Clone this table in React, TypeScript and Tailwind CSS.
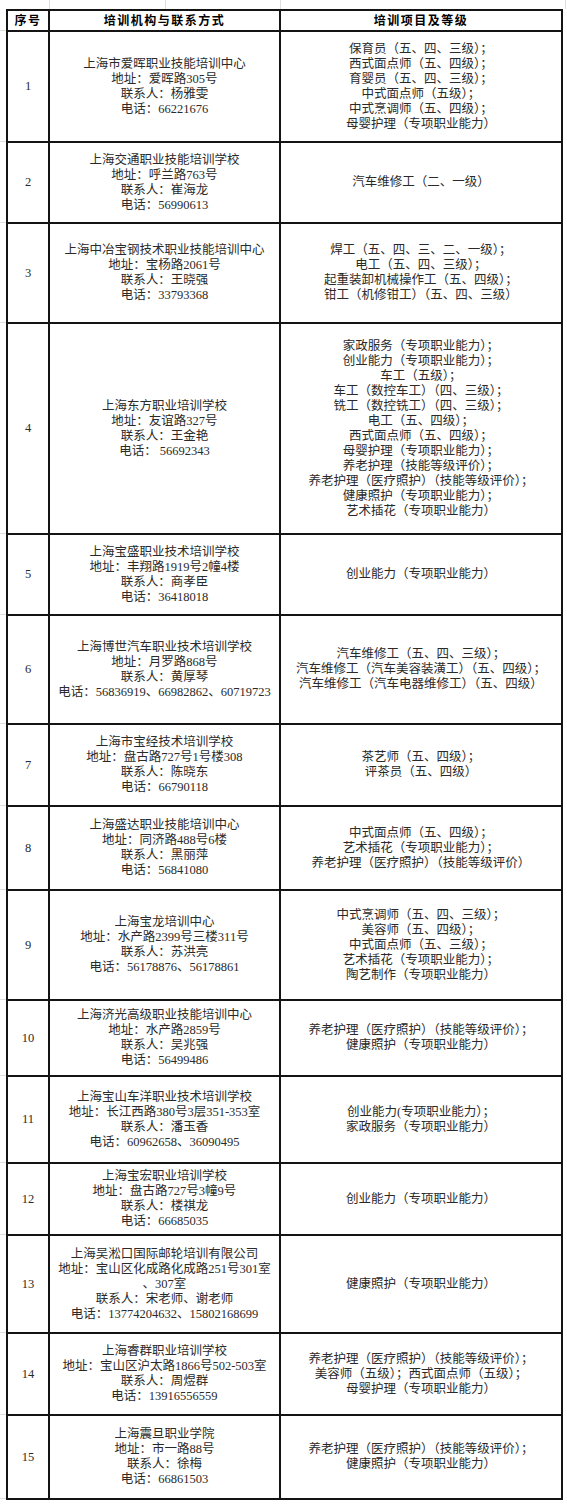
import React from 'react';

interface Row {
  no: string;
  h: string;
  g: string;
  org: string[];
  items: string[];
}

const rows: Row[] = [
  {
    no: '1',
    h: 'h-[109px]',
    g: 'h-[111px]',
    org: ['上海市爱晖职业技能培训中心', '地址：爱晖路305号', '联系人：杨雅雯', '电话：66221676'],
    items: [
      '保育员（五、四、三级）；',
      '西式面点师（五、四级）；',
      '育婴员（五、四、三级）；',
      '中式面点师（五级）；',
      '中式烹调师（五、四级）；',
      '母婴护理（专项职业能力）'
    ]
  },
  {
    no: '2',
    h: 'h-[79px]',
    g: 'h-[81px]',
    org: ['上海交通职业技能培训学校', '地址：呼兰路763号', '联系人：崔海龙', '电话：56990613'],
    items: ['汽车维修工（二、一级）']
  },
  {
    no: '3',
    h: 'h-[98px]',
    g: 'h-[100px]',
    org: ['上海中冶宝钢技术职业技能培训中心', '地址：宝杨路2061号', '联系人：王晓强', '电话：33793368'],
    items: [
      '焊工（五、四、三、二、一级）；',
      '电工（五、四、三级）；',
      '起重装卸机械操作工（五、四级）；',
      '钳工（机修钳工）（五、四、三级）'
    ]
  },
  {
    no: '4',
    h: 'h-[209px]',
    g: 'h-[211px]',
    org: ['上海东方职业培训学校', '地址：友谊路327号', '联系人：王金艳', '电话： 56692343'],
    items: [
      '家政服务（专项职业能力）；',
      '创业能力（专项职业能力）；',
      '车工（五级）；',
      '车工（数控车工）（四、三级）；',
      '铣工（数控铣工）（四、三级）；',
      '电工（五、四级）；',
      '西式面点师（五、四级）；',
      '母婴护理（专项职业能力）；',
      '养老护理（技能等级评价）；',
      '养老护理（医疗照护）（技能等级评价）；',
      '健康照护（专项职业能力）；',
      '艺术插花（专项职业能力）'
    ]
  },
  {
    no: '5',
    h: 'h-[79px]',
    g: 'h-[81px]',
    org: ['上海宝盛职业技术培训学校', '地址：丰翔路1919号2幢4楼', '联系人：商孝臣', '电话：36418018'],
    items: ['创业能力（专项职业能力）']
  },
  {
    no: '6',
    h: 'h-[107px]',
    g: 'h-[109px]',
    org: ['上海博世汽车职业技术培训学校', '地址：月罗路868号', '联系人：黄厚琴', '电话：56836919、66982862、60719723'],
    items: [
      '汽车维修工（五、四、三级）；',
      '汽车维修工（汽车美容装潢工）（五、四级）；',
      '汽车维修工（汽车电器维修工）（五、四级）'
    ]
  },
  {
    no: '7',
    h: 'h-[80px]',
    g: 'h-[82px]',
    org: ['上海市宝经技术培训学校', '地址：盘古路727号1号楼308', '联系人：陈晓东', '电话：66790118'],
    items: ['茶艺师（五、四级）；', '评茶员（五、四级）']
  },
  {
    no: '8',
    h: 'h-[82px]',
    g: 'h-[84px]',
    org: ['上海盛达职业技能培训中心', '地址：同济路488号6楼', '联系人：黑丽萍', '电话：56841080'],
    items: ['中式面点师（五、四级）；', '艺术插花（专项职业能力）；', '养老护理（医疗照护）（技能等级评价）']
  },
  {
    no: '9',
    h: 'h-[108px]',
    g: 'h-[110px]',
    org: ['上海宝龙培训中心', '地址：水产路2399号三楼311号', '联系人：苏洪亮', '电话：56178876、56178861'],
    items: [
      '中式烹调师（五、四、三级）；',
      '美容师（五、四级）；',
      '中式面点师（五、三级）；',
      '艺术插花（专项职业能力）；',
      '陶艺制作（专项职业能力）'
    ]
  },
  {
    no: '10',
    h: 'h-[74px]',
    g: 'h-[76px]',
    org: ['上海济光高级职业技能培训中心', '地址：水产路2859号', '联系人：吴兆强', '电话：56499486'],
    items: ['养老护理（医疗照护）（技能等级评价）；', '健康照护（专项职业能力）']
  },
  {
    no: '11',
    h: 'h-[85px]',
    g: 'h-[87px]',
    org: ['上海宝山车洋职业技术培训学校', '地址：长江西路380号3层351-353室', '联系人：潘玉香', '电话：60962658、36090495'],
    items: ['创业能力(专项职业能力）；', '家政服务（专项职业能力）']
  },
  {
    no: '12',
    h: 'h-[70px]',
    g: 'h-[72px]',
    org: ['上海宝宏职业培训学校', '地址：盘古路727号3幢9号', '联系人：楼祺龙', '电话：66685035'],
    items: ['创业能力（专项职业能力）']
  },
  {
    no: '13',
    h: 'h-[96px]',
    g: 'h-[98px]',
    org: [
      '上海吴淞口国际邮轮培训有限公司',
      '地址：宝山区化成路化成路251号301室',
      '、307室',
      '联系人：宋老师、谢老师',
      '电话：13774204632、15802168699'
    ],
    items: ['健康照护（专项职业能力）']
  },
  {
    no: '14',
    h: 'h-[80px]',
    g: 'h-[82px]',
    org: ['上海睿群职业培训学校', '地址：宝山区沪太路1866号502-503室', '联系人：周煜群', '电话：13916556559'],
    items: ['养老护理（医疗照护）（技能等级评价）；', '美容师（五级）；西式面点师（五级）；', '母婴护理（专项职业能力）']
  },
  {
    no: '15',
    h: 'h-[82px]',
    g: 'h-[84px]',
    org: ['上海震旦职业学院', '地址：市一路88号', '联系人：徐梅', '电话：66861503'],
    items: ['养老护理（医疗照护）（技能等级评价）；', '健康照护（专项职业能力）']
  }
];

const cell = 'bg-white flex flex-col items-center justify-center text-center whitespace-nowrap';

export default function App() {
  return (
    <div className="w-[567px] min-h-[1505px] bg-white text-[#2a2a2a] font-['Liberation_Serif','Noto_Sans_CJK_SC',serif]">
      {/* spreadsheet gridlines above the table */}
      <div className="flex h-[9px]">
        <div className="w-[50px] border-r border-[#dedede]" />
        <div className="w-[116px] border-r border-[#dedede]" />
        <div className="w-[115px] border-r border-[#dedede]" />
        <div className="w-[285px] border-r border-[#dedede]" />
      </div>
      <div className="flex">
        <div className="w-[6px] flex flex-col">
          <div className="h-[22px] border-b border-[#dedede]" />
          {rows.map((r) => (
            <div key={r.no} className={`${r.g} border-b border-[#dedede]`} />
          ))}
        </div>
        <div className="grid grid-cols-[40px_229px_280px] gap-[2px] bg-[#141414] p-[2px]">
          <div className={`${cell} h-[19px] text-[12px] font-bold tracking-[1.5px] text-black`}>序号</div>
          <div className={`${cell} h-[19px] text-[12px] font-bold tracking-[1.5px] text-black`}>培训机构与联系方式</div>
          <div className={`${cell} h-[19px] text-[12px] font-bold tracking-[1.5px] text-black`}>培训项目及等级</div>
          {rows.map((r) => (
            <React.Fragment key={r.no}>
              <div className={`${cell} ${r.h} text-[12.5px]`}>{r.no}</div>
              <div className={`${cell} ${r.h} text-[12.5px] leading-[15px]`}>
                {r.org.map((line, i) => (
                  <div key={i}>{line}</div>
                ))}
              </div>
              <div className={`${cell} ${r.h} text-[12.5px] leading-[15px]`}>
                {r.items.map((line, i) => (
                  <div key={i}>{line}</div>
                ))}
              </div>
            </React.Fragment>
          ))}
        </div>
      </div>
    </div>
  );
}
